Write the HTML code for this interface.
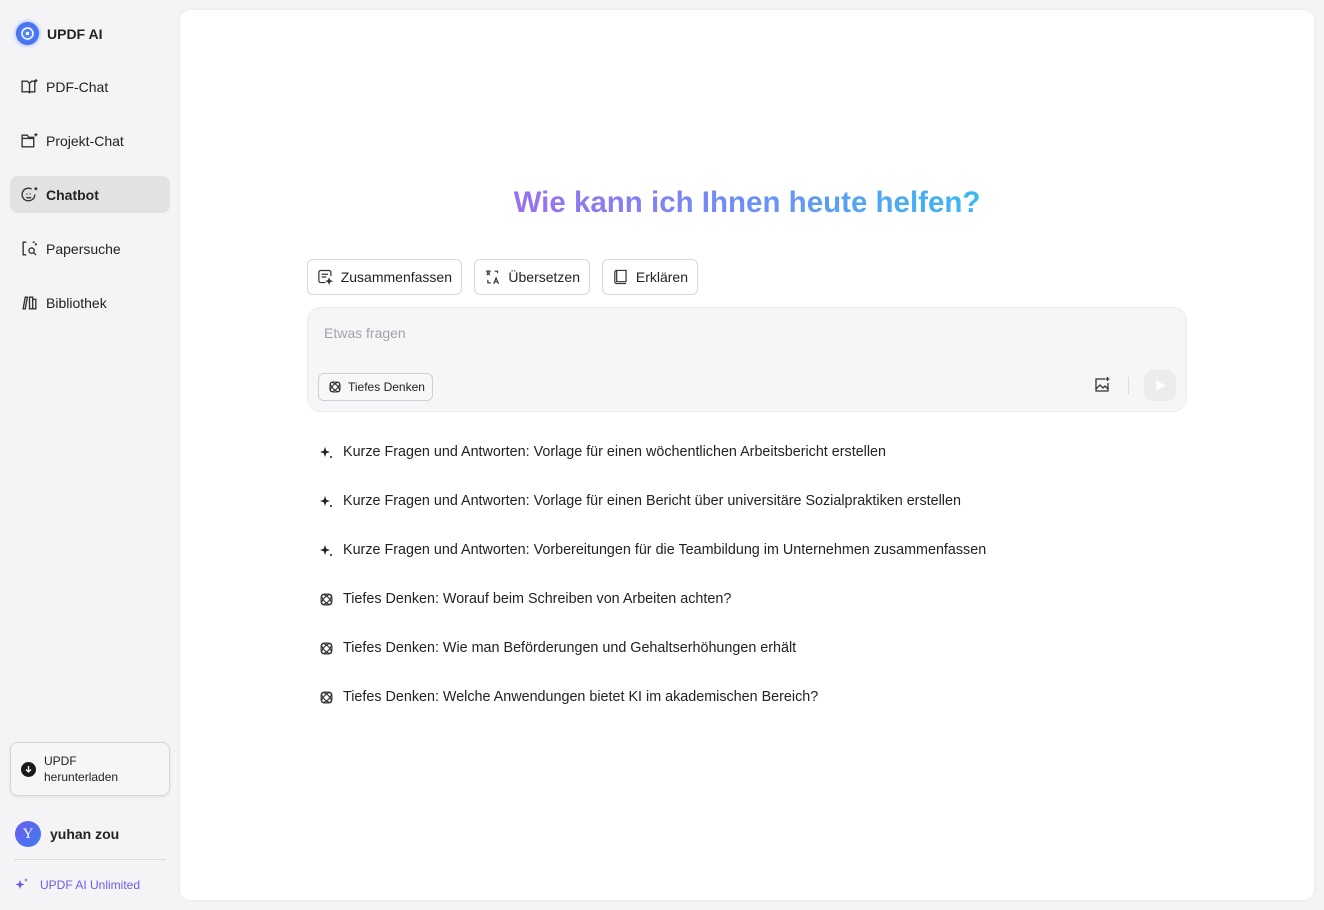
<!DOCTYPE html>
<html><head><meta charset="utf-8">
<style>
*{box-sizing:border-box;margin:0;padding:0}
body{width:1324px;height:910px;background:#f4f4f6;font-family:"Liberation Sans",sans-serif;color:#222;position:relative;overflow:hidden}
.abs{position:absolute}
.nav{position:absolute;left:10px;width:160px;height:37px;display:flex;align-items:center;padding-left:10px;font-size:14px;color:#222;border-radius:8px}
.nav svg{margin-right:7px}
.nav.act{background:#e2e2e4;font-weight:bold}
.main{position:absolute;left:180px;top:10px;width:1134px;height:890px;background:#fff;border-radius:10px;box-shadow:0 0 3px rgba(0,0,0,.08)}
.btn{position:absolute;top:259px;height:36px;border:1px solid #d8d8dc;border-radius:6px;background:#fff;display:flex;align-items:center;padding:0 9px;font-size:14px;color:#222}
.btn svg{margin-right:7px}
.sug{position:absolute;left:319px;font-size:14.35px;color:#222;display:flex;align-items:center}
.sug svg{margin-right:9px}
</style></head><body>
<div class="abs" style="left:16px;top:22px;width:23px;height:23px;border-radius:50%;background:radial-gradient(circle,#5b8cff,#3d63e8);box-shadow:0 0 4px #7aa0ff"><svg width="23" height="23" viewBox="0 0 23 23"><circle cx="11.5" cy="11.5" r="5.5" fill="none" stroke="#fff" stroke-width="1.5"/><circle cx="11.5" cy="11.5" r="1.6" fill="#fff"/></svg></div>
<div class="abs" style="left:47px;top:26px;font-size:14px;font-weight:bold">UPDF AI</div>

<div class="nav" style="top:68px"><svg width="19" height="19" viewBox="0 0 18 18" fill="none" stroke="#333" stroke-width="1.3"><path d="M2 4h5l2 2 2-2h3v10h-4l-1 1-1-1H2z M9 6v8"/><path d="M15 2v3M13.5 3.5h3"/></svg>PDF-Chat</div>
<div class="nav" style="top:122px"><svg width="19" height="19" viewBox="0 0 18 18" fill="none" stroke="#333" stroke-width="1.3"><path d="M2 4h5l1 2h5v9H2z M2 7h11"/><path d="M15 2v3M13.5 3.5h3"/></svg>Projekt-Chat</div>
<div class="nav act" style="top:176px"><svg width="19" height="19" viewBox="0 0 18 18" fill="none" stroke="#333" stroke-width="1.3"><path d="M14 9a6 6 0 1 1-3-5.2"/><path d="M6.5 8v1M9.5 8v1M6 11.5c1.5 1 3 1 4.5 0"/><path d="M15 2v3M13.5 3.5h3"/></svg>Chatbot</div>
<div class="nav" style="top:230px"><svg width="19" height="19" viewBox="0 0 18 18" fill="none" stroke="#333" stroke-width="1.3"><path d="M6 3H3v12h3M12 3h2"/><circle cx="11" cy="11" r="2.5"/><path d="M13 13l2 2"/><path d="M15 4v2M14 5h2"/></svg>Papersuche</div>
<div class="nav" style="top:284px"><svg width="19" height="19" viewBox="0 0 18 18" fill="none" stroke="#333" stroke-width="1.3"><path d="M3 15l2-11h2l-2 11zM9 4h3v11H9zM12 6h3v9h-3"/></svg>Bibliothek</div>

<div class="abs" style="left:10px;top:742px;width:160px;height:54px;border:1px solid #d6d6da;border-radius:8px;background:#f6f6f8;box-shadow:0 1px 3px rgba(0,0,0,.08)"></div>
<div class="abs" style="left:21px;top:762px;width:15px;height:15px;border-radius:50%;background:#1a1a1a"><svg width="15" height="15" viewBox="0 0 15 15" fill="none" stroke="#fff" stroke-width="1.3"><path d="M7.5 4v6M5 7.5l2.5 2.5 2.5-2.5"/></svg></div>
<div class="abs" style="left:44px;top:753px;font-size:12px;line-height:16px;color:#222">UPDF<br>herunterladen</div>
<div class="abs" style="left:15px;top:821px;width:26px;height:26px;border-radius:50%;background:linear-gradient(135deg,#6a5cf0,#3f7cf0);color:#fff;font-family:'Liberation Serif',serif;font-size:15px;text-align:center;line-height:26px">Y</div>
<div class="abs" style="left:50px;top:826px;font-size:14px;font-weight:bold;color:#222">yuhan zou</div>
<div class="abs" style="left:14px;top:859px;width:152px;height:1px;background:#ddd"></div>
<svg class="abs" style="left:14px;top:876px" width="16" height="16" viewBox="0 0 16 16" fill="#6a5ce8"><path d="M6 4l1.2 3.3L10.5 8.5 7.2 9.7 6 13 4.8 9.7 1.5 8.5 4.8 7.3z"/><path d="M12 2l.5 1.5L14 4l-1.5.5L12 6l-.5-1.5L10 4l1.5-.5z"/></svg>
<div class="abs" style="left:40px;top:878px;font-size:12px;color:#6a5ce8">UPDF AI Unlimited</div>

<div class="main"></div>
<div class="abs" style="left:180px;width:1134px;top:186px;text-align:center;font-size:29.5px;font-weight:bold;"><span style="background:linear-gradient(90deg,#9a70ee,#6e8ff5 50%,#3ab8f2);-webkit-background-clip:text;background-clip:text;color:transparent">Wie kann ich Ihnen heute helfen?</span></div>

<div class="btn" style="left:307px;width:155px"><svg width="18" height="18" viewBox="0 0 18 18" fill="none" stroke="#333" stroke-width="1.3"><path d="M9 15H4a2 2 0 0 1-2-2V4a2 2 0 0 1 2-2h9a2 2 0 0 1 2 2v4M5 6h7M5 9h5"/><path d="M13 11l.7 1.8 1.8.7-1.8.7L13 16l-.7-1.8-1.8-.7 1.8-.7z" fill="#333"/></svg>Zusammenfassen</div>
<div class="btn" style="left:474px;width:116px"><svg width="18" height="18" viewBox="0 0 18 18" fill="none" stroke="#333" stroke-width="1.2"><path d="M2 3h5M4.5 2v1M3 4l3 3M6 4L3 7M11 3h3v2M7 15H4v-3M10 16l2.5-6 2.5 6M11 14h3"/></svg>Übersetzen</div>
<div class="btn" style="left:602px;width:96px"><svg width="18" height="18" viewBox="0 0 18 18" fill="none" stroke="#333" stroke-width="1.3"><path d="M5 2h10v12H5zM5 2a2 2 0 0 0-2 2v10a2 2 0 0 0 2 2h10"/></svg>Erklären</div>

<div class="abs" style="left:307px;top:307px;width:880px;height:105px;background:#f6f5f8;border:1px solid #ebebef;border-radius:14px"></div>
<div class="abs" style="left:324px;top:325px;font-size:14px;color:#a3a3a8">Etwas fragen</div>
<div class="abs" style="left:318px;top:373px;width:115px;height:28px;border:1px solid #cfcfd4;border-radius:6px;background:#f7f7f9;display:flex;align-items:center;padding-left:9px;font-size:12px;color:#222"><svg width="14" height="14" viewBox="0 0 14 14" fill="none" stroke="#333" stroke-width="1.1" style="margin-right:6px"><ellipse cx="7" cy="7" rx="6" ry="2.5" transform="rotate(45 7 7)"/><ellipse cx="7" cy="7" rx="6" ry="2.5" transform="rotate(-45 7 7)"/><rect x="2" y="2" width="10" height="10" rx="3"/></svg>Tiefes Denken</div>
<svg class="abs" style="left:1093px;top:376px" width="18" height="18" viewBox="0 0 18 18" fill="none" stroke="#333" stroke-width="1.3"><path d="M12 3H3v12h12V7"/><path d="M3 13l4-4 3 3 2-2 3 3"/><path d="M14.5 1v4M12.5 3h4"/></svg>
<div class="abs" style="left:1128px;top:377px;width:1px;height:17px;background:#ddd"></div>
<div class="abs" style="left:1144px;top:370px;width:32px;height:31px;border-radius:9px;background:#ececef"><svg width="32" height="31" viewBox="0 0 32 31"><path d="M11 10l11 5.5L11 21l2-5.5z" fill="#fff"/></svg></div>

<div class="sug" style="top:444px"><svg width="15" height="15" viewBox="0 0 15 15" fill="#222"><path d="M6 2l1.3 3.7L11 7 7.3 8.3 6 12 4.7 8.3 1 7l3.7-1.3z"/><circle cx="12" cy="12" r="1"/></svg>Kurze Fragen und Antworten: Vorlage für einen wöchentlichen Arbeitsbericht erstellen</div>
<div class="sug" style="top:493px"><svg width="15" height="15" viewBox="0 0 15 15" fill="#222"><path d="M6 2l1.3 3.7L11 7 7.3 8.3 6 12 4.7 8.3 1 7l3.7-1.3z"/><circle cx="12" cy="12" r="1"/></svg>Kurze Fragen und Antworten: Vorlage für einen Bericht über universitäre Sozialpraktiken erstellen</div>
<div class="sug" style="top:542px"><svg width="15" height="15" viewBox="0 0 15 15" fill="#222"><path d="M6 2l1.3 3.7L11 7 7.3 8.3 6 12 4.7 8.3 1 7l3.7-1.3z"/><circle cx="12" cy="12" r="1"/></svg>Kurze Fragen und Antworten: Vorbereitungen für die Teambildung im Unternehmen zusammenfassen</div>
<div class="sug" style="top:591px"><svg width="15" height="15" viewBox="0 0 14 14" fill="none" stroke="#333" stroke-width="1.1"><ellipse cx="7" cy="7" rx="6" ry="2.5" transform="rotate(45 7 7)"/><ellipse cx="7" cy="7" rx="6" ry="2.5" transform="rotate(-45 7 7)"/><rect x="2" y="2" width="10" height="10" rx="3"/></svg>Tiefes Denken: Worauf beim Schreiben von Arbeiten achten?</div>
<div class="sug" style="top:640px"><svg width="15" height="15" viewBox="0 0 14 14" fill="none" stroke="#333" stroke-width="1.1"><ellipse cx="7" cy="7" rx="6" ry="2.5" transform="rotate(45 7 7)"/><ellipse cx="7" cy="7" rx="6" ry="2.5" transform="rotate(-45 7 7)"/><rect x="2" y="2" width="10" height="10" rx="3"/></svg>Tiefes Denken: Wie man Beförderungen und Gehaltserhöhungen erhält</div>
<div class="sug" style="top:689px"><svg width="15" height="15" viewBox="0 0 14 14" fill="none" stroke="#333" stroke-width="1.1"><ellipse cx="7" cy="7" rx="6" ry="2.5" transform="rotate(45 7 7)"/><ellipse cx="7" cy="7" rx="6" ry="2.5" transform="rotate(-45 7 7)"/><rect x="2" y="2" width="10" height="10" rx="3"/></svg>Tiefes Denken: Welche Anwendungen bietet KI im akademischen Bereich?</div>
</body></html>
